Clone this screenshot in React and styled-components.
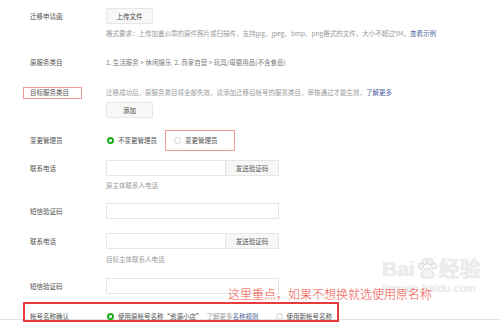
import styled, { createGlobalStyle } from 'styled-components';

const GlobalStyle = createGlobalStyle`
  html, body {
    margin: 0;
    padding: 0;
    background: #ffffff;
  }
  body {
    font-family: "Noto Sans CJK SC", "Liberation Sans", sans-serif;
  }
`;

const Page = styled.div`
  position: relative;
  width: 500px;
  height: 324px;
  overflow: hidden;
  padding-top: 8px;
  box-sizing: border-box;
  background: #fff;
`;

const Row = styled.div`
  display: grid;
  grid-template-columns: 76px 280px;
  padding-left: 30px;
  margin-top: ${({ $gap }) => $gap || 0}px;
  align-items: start;
`;

const Label = styled.div`
  font-size: 6.5px;
  color: #505050;
  line-height: ${({ $lh }) => $lh || 10}px;
  white-space: nowrap;
`;

const Control = styled.div`
  display: flex;
  flex-direction: column;
  align-items: flex-start;
`;

const Btn = styled.button`
  width: 47px;
  height: 16px;
  padding: 0;
  border: 1px solid #e6e6e6;
  border-radius: 1px;
  background: #f8f8f8;
  color: #444;
  font-family: "Noto Sans CJK SC", sans-serif;
  font-size: 6.5px;
  margin-top: ${({ $gap }) => $gap || 0}px;
  cursor: pointer;
`;

const Caption = styled.div`
  font-size: 6.5px;
  line-height: 10px;
  color: ${({ $dark }) => ($dark ? '#7a7a7a' : '#9a9a9a')};
  white-space: nowrap;
  margin-top: ${({ $gap }) => $gap || 0}px;
`;

const Link = styled.a`
  color: #4a5f9c;
  text-decoration: none;
`;

const InputGroup = styled.div`
  display: flex;
  height: 16px;
`;

const Input = styled.div`
  width: ${({ $w }) => $w}px;
  height: 16px;
  box-sizing: border-box;
  border: 1px solid #e6e6e6;
  background: #fff;
`;

const SendBtn = styled.div`
  width: 53px;
  height: 16px;
  box-sizing: border-box;
  border: 1px solid #e6e6e6;
  border-left: none;
  background: #f7f7f7;
  color: #555;
  font-size: 6.5px;
  line-height: 14px;
  text-align: center;
`;

const RadioLine = styled.div`
  display: flex;
  align-items: center;
  height: 10px;
  font-size: 6.5px;
  color: #505050;
  white-space: nowrap;
`;

const Option = styled.span`
  display: flex;
  align-items: center;
  margin-right: 16px;
`;

const Radio = styled.span`
  width: 7px;
  height: 7px;
  box-sizing: border-box;
  border-radius: 50%;
  border: ${({ $on }) => ($on ? '2px solid #1aad19' : '1px solid #cfcfcf')};
  margin-right: 4px;
  margin-left: 1px;
  background: #fff;
`;

const Muted = styled.span`
  color: #9a9a9a;
  margin-left: 4px;
`;

const Divider = styled.div`
  height: 1px;
  background: #e4e4e4;
  margin-top: -2px;
`;

const Mark = styled.div`
  position: absolute;
  left: ${({ $x }) => $x}px;
  top: ${({ $y }) => $y}px;
  width: ${({ $w }) => $w}px;
  height: ${({ $h }) => $h}px;
  box-sizing: border-box;
  border: ${({ $bold }) => ($bold ? '2px solid #e8393b' : '1px solid #f29a9a')};
  pointer-events: none;
`;

const Watermark = styled.div`
  position: absolute;
  left: 382px;
  top: 256px;
  color: #ececec;
  font-family: "Liberation Sans", "Noto Sans CJK SC", sans-serif;
  text-shadow: 0 0 1px #dadada;
  pointer-events: none;
`;

const MarkTop = styled.div`
  display: flex;
  align-items: center;
  font-size: 21px;
  font-weight: bold;
  line-height: 26px;
`;

const MarkSub = styled.div`
  font-size: 11px;
  line-height: 12px;
  letter-spacing: 0.3px;
`;

const Note = styled.div`
  position: absolute;
  left: 228px;
  top: 288px;
  font-size: 12px;
  line-height: 14px;
  font-weight: 300;
  color: #ee4f46;
  font-family: "Liberation Serif", "Noto Sans CJK SC", serif;
  white-space: nowrap;
`;

const Paw = () => (
  <svg width="24" height="24" viewBox="0 0 24 24" fill="#f3f3f3" stroke="#dadada" strokeWidth="1">
    <ellipse cx="6" cy="9" rx="2.6" ry="3.2" />
    <ellipse cx="10" cy="4.5" rx="2.6" ry="3.2" />
    <ellipse cx="15" cy="4.5" rx="2.6" ry="3.2" />
    <ellipse cx="19" cy="9" rx="2.6" ry="3.2" />
    <path d="M12.5 11c-3 0-6.5 4.5-6.5 7.5 0 2.5 2.5 3 4 2.5 1-.3 1.8-.6 2.5-.6s1.5.3 2.5.6c1.5.5 4 0 4-2.5 0-3-3.5-7.5-6.5-7.5z" />
  </svg>
);

const App = () => {
  return (
    <>
      <GlobalStyle />
      <Page>
        <Row>
          <Label $lh={16}>迁移申请函</Label>
          <Control>
            <Btn>上传文件</Btn>
            <Caption $gap={4}>
              格式要求：上传加盖公章的原件照片或扫描件，支持jpg、jpeg、bmp、png格式的文件，大小不超过5M。<Link>查看示例</Link>
            </Caption>
          </Control>
        </Row>

        <Row $gap={19}>
          <Label>原服务类目</Label>
          <Control>
            <Caption $dark>1. 生活服务 &gt; 休闲娱乐&nbsp;&nbsp;2. 商家自营 &gt; 玩具/母婴用品(不含食品)</Caption>
          </Control>
        </Row>

        <Row $gap={20}>
          <Label>目标服务类目</Label>
          <Control>
            <Caption>
              迁移成功后，原服务类目将全部失效，请添加迁移后帐号的服务类目，审核通过才能生效，<Link>了解更多</Link>
            </Caption>
            <Btn $gap={5}>添加</Btn>
          </Control>
        </Row>

        <Row $gap={17}>
          <Label>变更管理员</Label>
          <RadioLine>
            <Option><Radio $on />不变更管理员</Option>
            <Option><Radio />变更管理员</Option>
          </RadioLine>
        </Row>

        <Row $gap={15}>
          <Label $lh={16}>联系电话</Label>
          <Control>
            <InputGroup>
              <Input $w={120} />
              <SendBtn>发送验证码</SendBtn>
            </InputGroup>
            <Caption $gap={4}>原主体联系人电话</Caption>
          </Control>
        </Row>

        <Row $gap={13}>
          <Label $lh={16}>短信验证码</Label>
          <Input $w={173} />
        </Row>

        <Row $gap={14}>
          <Label $lh={16}>联系电话</Label>
          <Control>
            <InputGroup>
              <Input $w={120} />
              <SendBtn>发送验证码</SendBtn>
            </InputGroup>
            <Caption $gap={5}>目标主体联系人电话</Caption>
          </Control>
        </Row>

        <Row $gap={14}>
          <Label $lh={16}>短信验证码</Label>
          <Input $w={173} />
        </Row>

        <Row $gap={17}>
          <Label>帐号名称确认</Label>
          <RadioLine>
            <Option>
              <Radio $on />使用原帐号名称“资源小店”<Muted>了解更多</Muted><Link>名称规则</Link>
            </Option>
            <Option><Radio />使用新帐号名称</Option>
          </RadioLine>
        </Row>
        <Divider />

        <Mark $x={23} $y={87} $w={59} $h={12} />
        <Mark $x={165} $y={130} $w={70} $h={21} />
        <Mark $x={23} $y={302} $w={316} $h={20} $bold />

        <Watermark>
          <MarkTop>Bai<Paw />经验</MarkTop>
          <MarkSub>jingyan.baidu.com</MarkSub>
        </Watermark>
        <Note>这里重点，如果不想换就选使用原名称</Note>
      </Page>
    </>
  );
};

export default App;
